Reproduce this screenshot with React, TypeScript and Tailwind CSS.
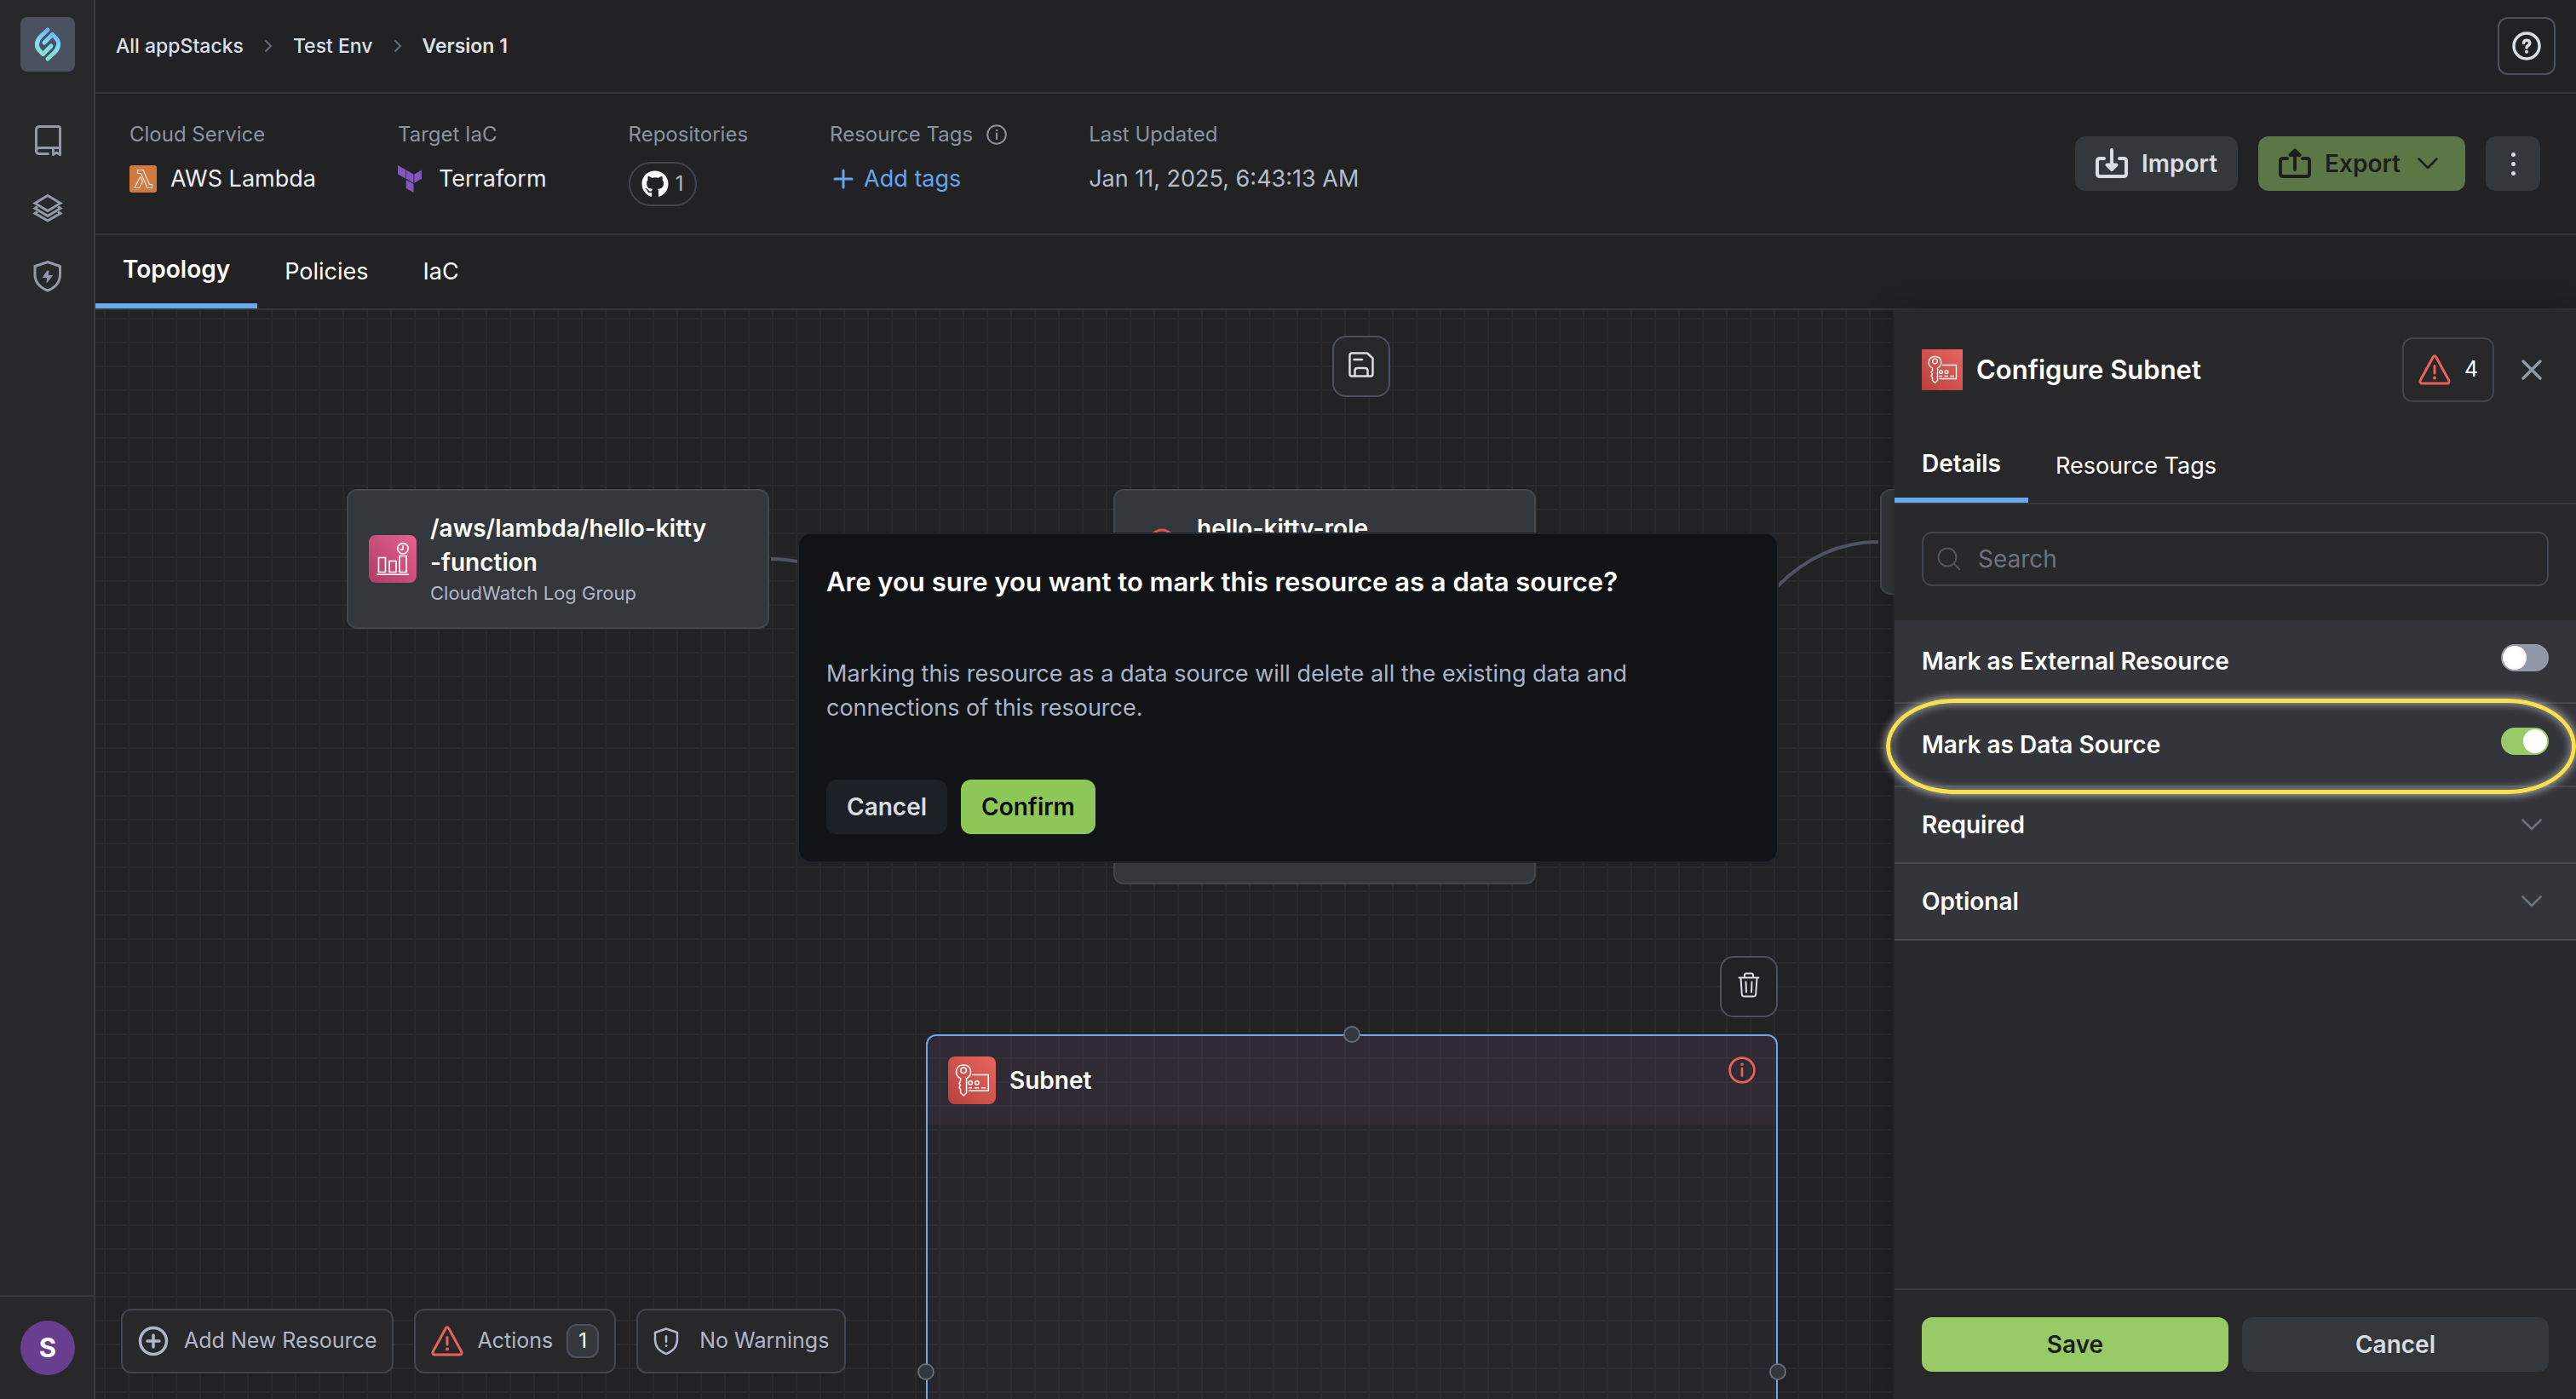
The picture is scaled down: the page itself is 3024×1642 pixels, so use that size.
import { useState } from 'react';
import type { ReactNode } from 'react';
import clsx from 'clsx';
import { FaGithub } from 'react-icons/fa';

function LogoIcon() {
  return (
    <svg viewBox="0 0 64 64" className="size-16" fill="none" aria-hidden="true">
      <defs>
        <linearGradient id="logo" x1="40" y1="12" x2="24" y2="52" gradientUnits="userSpaceOnUse">
          <stop offset="0" stopColor="#62a8f5" />
          <stop offset="0.5" stopColor="#7de0fb" />
          <stop offset="1" stopColor="#7ee2b8" />
        </linearGradient>
      </defs>
      <g stroke="url(#logo)" strokeWidth="5" strokeLinecap="round" strokeLinejoin="round">
        <path d="M32 15 L24 22.5 C18 28.5 18 35.5 23 40 L26.5 43.5 L36 34" />
        <path d="M32 49 L40 41.5 C46 35.5 46 28.5 41 24 L37.5 20.5 L28 30" />
      </g>
    </svg>
  );
}

function BookIcon() {
  return (
    <svg viewBox="0 0 40 40" className="size-10" fill="none" stroke="currentColor" strokeWidth="3" strokeLinecap="round" aria-hidden="true">
      <path d="M20.5 36.5 H10.5 Q6.5 36.5 6.5 32.5 V8.5 Q6.5 4.5 10.5 4.5 H32 Q34.5 4.5 34.5 7 V37" />
      <path d="M6.5 33 Q6.5 29.5 10.5 29.5 H34.5" />
      <path d="M26.5 30 V37.5 L30.5 35 L34.5 37.5" strokeLinejoin="round" />
    </svg>
  );
}

function LayersIcon() {
  return (
    <svg viewBox="0 0 40 40" className="size-10" fill="none" stroke="currentColor" strokeWidth="3" aria-hidden="true">
      <path d="M20 5.5 L35 14.5 L20 23.5 L5 14.5 Z" />
      <path d="M8 18.5 L5 20.5 L20 29.5 L35 20.5 L32 18.5" />
      <path d="M8 24.5 L5 26.5 L20 35 L35 26.5 L32 24.5" />
    </svg>
  );
}

function ShieldBoltIcon() {
  return (
    <svg viewBox="0 0 40 40" className="size-10" fill="none" stroke="currentColor" strokeWidth="3" strokeLinejoin="round" aria-hidden="true">
      <path d="M20 3.5 L34.5 8.5 V18 C34.5 27.5 29 33.5 20 37 C11 33.5 5 27.5 5 18 V8.5 Z" />
      <path d="M19.500 14 L14.500 21.500 H19.500 L19 27.500 L25.500 19.500 H20.500 L21 14 Z" fill="currentColor" strokeWidth="1" />
    </svg>
  );
}

function ChevronRight() {
  return (
    <svg viewBox="0 0 10 16" className="h-4 w-[10px] text-[#636b7a]" fill="none" stroke="currentColor" strokeWidth="2" aria-hidden="true">
      <path d="M1.5 1.5 L8 8 L1.5 14.5" />
    </svg>
  );
}

function ChevronDown() {
  return (
    <svg viewBox="0 0 24 14" className="h-[14px] w-6" fill="none" stroke="currentColor" strokeWidth="2.5" strokeLinecap="round" strokeLinejoin="round" aria-hidden="true">
      <path d="M1.5 1.5 L12 12 L22.5 1.5" />
    </svg>
  );
}

function LambdaIcon() {
  return (
    <svg viewBox="0 0 32 32" className="size-8" fill="none" aria-hidden="true">
      <rect width="32" height="32" rx="3" fill="#d07a40" />
      <g stroke="#fbe9dc" strokeWidth="1.2" strokeLinejoin="round">
        <path d="M9.5 5.5 H16 L23.5 22.5 H26.5 V26.5 H21 L13.5 9.5 H9.5 Z" />
        <path d="M12.5 13.5 L15.5 19 L11.5 26.5 H6 Z" />
      </g>
    </svg>
  );
}

function TerraformIcon() {
  return (
    <svg viewBox="0 0 28 32" className="h-8 w-7" fill="#8355be" aria-hidden="true">
      <path d="M0 0 L9 5 V15.5 L0 10.5 Z" />
      <path d="M9.7 5.5 L18.5 10.5 V20.8 L9.7 15.8 Z" />
      <path d="M19.3 10.5 L28 5.5 V15.8 L19.3 20.8 Z" />
      <path d="M9.7 17 L18.5 22 V32 L9.7 27 Z" />
    </svg>
  );
}

function InfoIcon({ className, strokeWidth = 2 }: { className?: string; strokeWidth?: number }) {
  return (
    <svg viewBox="0 0 24 24" className={className} fill="none" stroke="currentColor" strokeWidth={strokeWidth} strokeLinecap="round" aria-hidden="true">
      <circle cx="12" cy="12" r="10.8" />
      <path d="M12 10.5 V17" />
      <circle cx="12" cy="7" r="0.8" fill="currentColor" strokeWidth="1" />
    </svg>
  );
}

function PlusIcon() {
  return (
    <svg viewBox="0 0 24 24" className="size-6" fill="none" stroke="currentColor" strokeWidth="3" strokeLinecap="round" aria-hidden="true">
      <path d="M12 2 V22 M2 12 H22" />
    </svg>
  );
}

function HelpIcon() {
  return (
    <svg viewBox="0 0 34 34" className="size-[34px]" fill="none" stroke="currentColor" aria-hidden="true">
      <circle cx="17" cy="17" r="15" strokeWidth="3.5" />
      <path d="M13.5 13.5 C13.5 9 20.8 9 20.8 13.5 C20.8 16.5 17 16.5 17 19" strokeWidth="3.5" strokeLinecap="round" />
      <circle cx="17" cy="23.8" r="2" fill="currentColor" stroke="none" />
    </svg>
  );
}

function TrayIcon({ up }: { up?: boolean }) {
  return (
    <svg viewBox="0 0 38 36" className="h-9 w-[38px]" fill="none" stroke="currentColor" strokeWidth="4" strokeLinecap="round" strokeLinejoin="round" aria-hidden="true">
      <path d="M10 12 H5 Q2 12 2 15 V30 Q2 33 5 33 H33 Q36 33 36 30 V15 Q36 12 33 12 H28" />
      {up ? <path d="M19 25 V3 M13.5 8 L19 2.5 L24.5 8 Z" /> : <path d="M19 2 V24 M13.5 19.5 L19 25 L24.5 19.5 Z" />}
    </svg>
  );
}

function WarningIcon() {
  return (
    <svg viewBox="0 0 38 36" className="h-9 w-[38px] shrink-0 text-[#e8625a]" fill="none" stroke="currentColor" strokeLinejoin="round" strokeLinecap="round" aria-hidden="true">
      <path d="M17.3 3 Q19 0.5 20.7 3 L35.8 30.5 Q36.8 34 33.5 34 H4.5 Q1.2 34 2.2 30.5 Z" strokeWidth="3" />
      <path d="M19 13.5 V22" strokeWidth="3" />
      <circle cx="19" cy="27.5" r="2" fill="currentColor" stroke="none" />
    </svg>
  );
}

function SaveIcon() {
  return (
    <svg viewBox="0 0 32 32" className="size-8" fill="none" stroke="currentColor" strokeWidth="2.5" strokeLinejoin="round" aria-hidden="true">
      <path d="M5 2.5 H23 L29.5 8.5 V27 Q29.5 29.5 27 29.5 H5 Q2.5 29.5 2.5 27 V5 Q2.5 2.5 5 2.5 Z" />
      <path d="M8.5 29 V23 Q8.5 20 11.5 20 H20.5 Q23.5 20 23.5 23 V29" />
      <path d="M7.5 10 H17" strokeLinecap="round" />
    </svg>
  );
}

function TrashIcon() {
  return (
    <svg viewBox="0 0 26 30" className="h-[30px] w-[26px]" fill="none" stroke="currentColor" strokeWidth="2" strokeLinecap="round" strokeLinejoin="round" aria-hidden="true">
      <path d="M1.5 6.5 H24.5 M8 6 V3.5 Q8 1.5 10 1.5 H16 Q18 1.5 18 3.5 V6" />
      <path d="M3.5 7 L4.8 26 Q5 28.5 7.5 28.5 H18.5 Q21 28.5 21.2 26 L22.5 7" />
      <path d="M9.5 11.5 L10 23.5 M16.5 11.5 L16 23.5" />
    </svg>
  );
}

function AddCircleIcon() {
  return (
    <svg viewBox="0 0 36 36" className="size-9" fill="none" stroke="currentColor" strokeWidth="3.5" strokeLinecap="round" aria-hidden="true">
      <circle cx="18" cy="18" r="15.5" />
      <path d="M18 11 V25 M11 18 H25" />
    </svg>
  );
}

function ShieldAlertIcon() {
  return (
    <svg viewBox="0 0 30 34" className="h-[34px] w-[30px]" fill="none" stroke="currentColor" strokeWidth="2.5" strokeLinejoin="round" strokeLinecap="round" aria-hidden="true">
      <path d="M15 2.5 L28 7 V15 C28 23.5 23 29 15 32 C7 29 2 23.5 2 15 V7 Z" />
      <path d="M15 11.5 V18" />
      <circle cx="15" cy="22.5" r="1" fill="currentColor" strokeWidth="1" />
    </svg>
  );
}

function SearchIcon() {
  return (
    <svg viewBox="0 0 28 28" className="size-7 text-[#4d5566]" fill="none" stroke="currentColor" strokeWidth="2" strokeLinecap="round" aria-hidden="true">
      <circle cx="12" cy="12" r="10.5" />
      <path d="M19.5 19.5 L26.5 26.5" />
    </svg>
  );
}

function CloseIcon() {
  return (
    <svg viewBox="0 0 24 24" className="size-6" fill="none" stroke="currentColor" strokeWidth="3.5" strokeLinecap="round" aria-hidden="true">
      <path d="M2 2 L22 22 M22 2 L2 22" />
    </svg>
  );
}

function SubnetIcon({ className }: { className?: string }) {
  return (
    <svg viewBox="0 0 48 48" className={className} fill="none" stroke="#fff" aria-hidden="true">
      <defs>
        <linearGradient id="subnet" x1="0" y1="1" x2="1" y2="0">
          <stop offset="0" stopColor="#b9403c" />
          <stop offset="1" stopColor="#e9655f" />
        </linearGradient>
      </defs>
      <rect width="48" height="48" fill="url(#subnet)" stroke="none" />
      <g strokeWidth="1.3" strokeLinejoin="round">
        <path d="M12.5 22 C6 19 7 8.5 15.5 8.5 C24 8.5 25 19 18.5 22 V36.5 L15.5 39.5 L12.5 36.5 V33 L11 31 L12.5 29 L11 27 L12.5 25 Z" />
        <circle cx="15.5" cy="14" r="2.8" />
        <path d="M24 18.5 H40.5 V34.5 H20.5" />
        <circle cx="22.5" cy="26.5" r="1.9" />
        <circle cx="29" cy="26.5" r="1.9" />
        <path d="M20.5 31.5 H24 M26.5 31.5 H31 M33.5 31.5 H38" />
      </g>
    </svg>
  );
}

function CloudWatchIcon() {
  return (
    <svg viewBox="0 0 56 56" className="size-14 shrink-0 rounded-lg" fill="none" stroke="#fff" strokeWidth="1.6" aria-hidden="true">
      <defs>
        <linearGradient id="cloudwatch" x1="0" y1="1" x2="1" y2="0">
          <stop offset="0" stopColor="#b03c66" />
          <stop offset="1" stopColor="#e5628f" />
        </linearGradient>
      </defs>
      <rect width="56" height="56" fill="url(#cloudwatch)" stroke="none" />
      <rect x="11.5" y="26.5" width="8" height="17" />
      <rect x="24" y="30.5" width="8" height="13" />
      <rect x="36" y="24.5" width="8" height="19" />
      <path d="M9 46.2 H47" />
      <circle cx="40" cy="15.8" r="6.2" />
      <path d="M40 12 V17 H36.5" />
    </svg>
  );
}

const sideLinks = [
  { name: 'Catalog', icon: <BookIcon /> },
  { name: 'Stacks', icon: <LayersIcon /> },
  { name: 'Security', icon: <ShieldBoltIcon /> },
];

function Sidebar() {
  return (
    <aside className="flex w-28 shrink-0 flex-col border-r-2 border-[#34373c] bg-[#28282a] pt-5">
      <a href="#" aria-label="Home" className="ml-6 size-16 rounded-lg bg-[#4b5160]">
        <LogoIcon />
      </a>
      <nav className="mt-[60px] ml-9 flex flex-col gap-10 text-[#9199a8]">
        {sideLinks.map((link) => (
          <a key={link.name} href="#" aria-label={link.name}>
            {link.icon}
          </a>
        ))}
      </nav>
      <div className="mt-auto border-t-2 border-[#34373c] py-7 pl-6">
        <button aria-label="Account" className="size-16 rounded-full bg-[#693e8e] text-[31px] leading-10 font-bold text-white">
          S
        </button>
      </div>
    </aside>
  );
}

function Field({ label, children }: { label: ReactNode; children: ReactNode }) {
  return (
    <div>
      <div className="flex h-8 items-center gap-4 text-[24px] text-[#8b93a2]">{label}</div>
      {children}
    </div>
  );
}

function Header() {
  return (
    <>
      <header className="flex h-[110px] items-center justify-between border-b-2 border-[#34373c] px-6">
        <nav aria-label="Breadcrumb" className="flex items-center gap-6 text-[23px] font-medium text-[#dde0e6]">
          <a href="#">All appStacks</a>
          <ChevronRight />
          <a href="#">Test Env</a>
          <ChevronRight />
          <a href="#" className="font-semibold">Version 1</a>
        </nav>
        <button aria-label="Help" className="flex size-[68px] items-center justify-center rounded-xl border-2 border-[#4b5160] text-[#d9dde4]">
          <HelpIcon />
        </button>
      </header>

      <section className="flex h-[166px] items-start justify-between border-b-2 border-[#34373c] pr-[42px] pl-10">
        <div className="flex gap-24 pt-8 text-[27px] leading-8">
          <Field label="Cloud Service">
            <div className="mt-5 flex items-center gap-4 text-[#ececee]">
              <LambdaIcon />
              AWS Lambda
            </div>
          </Field>
          <Field label="Target IaC">
            <div className="mt-5 flex items-center gap-5 text-[#ececee]">
              <TerraformIcon />
              Terraform
            </div>
          </Field>
          <Field label="Repositories">
            <button aria-label="1 repository" className="mt-4 flex h-[52px] w-20 items-center justify-center gap-2 rounded-full border-2 border-[#3f444d] text-[24px] text-[#aeb6c6]">
              <FaGithub className="size-8 text-white" />
              1
            </button>
          </Field>
          <Field
            label={
              <>
                Resource Tags
                <InfoIcon className="size-6" />
              </>
            }
          >
            <button className="mt-5 flex items-center gap-3 pl-1 text-[#64a6ee]">
              <PlusIcon />
              Add tags
            </button>
          </Field>
          <Field label="Last Updated">
            <div className="mt-5 text-[#b4bbca]">Jan 11, 2025, 6:43:13 AM</div>
          </Field>
        </div>

        <div className="flex gap-6 pt-[50px] text-[28px] font-semibold">
          <button className="flex h-16 items-center gap-4 rounded-xl bg-[#34373c] px-6 text-[#d9dde4]">
            <TrayIcon />
            Import
          </button>
          <button className="flex h-16 items-center gap-4 rounded-xl bg-[#5b7745] pr-8 pl-6 text-[#1d1f1f]">
            <TrayIcon up />
            Export
            <span className="pl-1">
              <ChevronDown />
            </span>
          </button>
          <button aria-label="More actions" className="flex size-16 flex-col items-center justify-center gap-[6px] rounded-xl bg-[#34373c]">
            <span className="size-[5px] rounded-full bg-[#d9dde4]" />
            <span className="size-[5px] rounded-full bg-[#d9dde4]" />
            <span className="size-[5px] rounded-full bg-[#d9dde4]" />
          </button>
        </div>
      </section>
    </>
  );
}

function Tabs({ tabs, className }: { tabs: string[]; className?: string }) {
  const [active, setActive] = useState(tabs[0]);

  return (
    <div role="tablist" className={clsx('flex border-b-2 border-[#34373c] text-white', className)}>
      {tabs.map((tab) => (
        <button
          key={tab}
          role="tab"
          aria-selected={tab === active}
          onClick={() => setActive(tab)}
          className={clsx('px-8', tab === active ? 'border-b-[6px] border-[#68a9ec] text-[28px] font-semibold' : 'text-[27px]')}
        >
          {tab}
        </button>
      ))}
    </div>
  );
}

function Handle({ className }: { className: string }) {
  return <span className={clsx('absolute size-5 rounded-full border-2 border-[#636b7a] bg-[#34383e]', className)} />;
}

function Canvas() {
  return (
    <main className="relative flex-1 overflow-hidden bg-[linear-gradient(to_right,#2a2a2c_2px,transparent_2px),linear-gradient(to_bottom,#2a2a2c_2px,transparent_2px)] bg-size-[28px_28px] bg-position-[10px_9px]">
      <svg className="absolute inset-0 size-full" fill="none" stroke="#4d5364" strokeWidth="4" aria-hidden="true">
        <path d="M793 292 C994 292 994 620 1195 620" />
        <path d="M1691 612 C1892 612 1892 272 2093 272" />
      </svg>

      <div className="absolute top-[210px] left-[295px] flex h-[164px] w-[496px] items-center gap-4 rounded-xl border-2 border-[#42464f] bg-[#34373b] px-6">
        <CloudWatchIcon />
        <div>
          <div className="text-[28px] leading-10 font-semibold text-white">
            /aws/lambda/hello-kitty
            <br />
            -function
          </div>
          <div className="text-[22px] leading-8 text-[#aeb6c9]">CloudWatch Log Group</div>
        </div>
      </div>

      <div className="absolute top-[210px] left-[1195px] flex h-[464px] w-[496px] items-start gap-4 rounded-xl border-2 border-[#42464f] bg-[#34373b] px-6 py-6">
        <svg viewBox="0 0 56 56" className="mt-4 size-14 shrink-0" fill="none" stroke="#d9534f" strokeWidth="3" aria-hidden="true">
          <circle cx="31" cy="20" r="14" />
          <path d="M7 52 C7 30 55 30 55 52" />
        </svg>
        <div className="text-[28px] leading-10 font-semibold text-white">hello-kitty-role</div>
      </div>

      <div className="absolute top-[210px] left-[2095px] h-[124px] w-[496px] rounded-xl border-2 border-[#42464f] bg-[#34373b]" />

      <button aria-label="Save layout" className="absolute top-[30px] left-[1452px] flex h-[72px] w-[68px] items-center justify-center rounded-2xl border-2 border-[#4b5160] bg-[#28282a] pb-1 text-[#d9dde4]">
        <SaveIcon />
      </button>

      <button aria-label="Delete resource" className="absolute top-[758px] left-[1907px] flex h-[72px] w-[68px] items-center justify-center rounded-2xl border-2 border-[#4b5160] bg-[#222224] pb-1 text-[#d9dde4]">
        <TrashIcon />
      </button>

      <div className="absolute top-[850px] left-[975px] h-[792px] w-[1000px] rounded-xl border-2 border-[#68a9ec] bg-[#605488]/8">
        <div className="flex h-[104px] items-start justify-between rounded-t-xl bg-[#814e86]/10 px-6 pt-6">
          <div className="flex items-center gap-4 text-[28px] font-semibold text-white">
            <SubnetIcon className="size-14 rounded-lg" />
            Subnet
          </div>
          <InfoIcon className="size-8 text-[#e8625a]" />
        </div>
        <Handle className="-top-3 left-[488px]" />
        <Handle className="top-[384px] -left-3" />
        <Handle className="top-[384px] -right-3" />
      </div>

      <div className="absolute bottom-[30px] left-[30px] flex gap-6 text-[25px] text-[#aeb6c9]">
        <button className="flex h-[76px] items-center gap-[18px] rounded-xl border-2 border-[#3f444d] bg-[#28282a] px-[18px]">
          <AddCircleIcon />
          Add New Resource
        </button>
        <button className="flex h-[76px] items-center gap-4 rounded-xl border-2 border-[#3f444d] bg-[#28282a] px-[18px]">
          <WarningIcon />
          Actions
          <span className="flex h-10 w-[38px] items-center justify-center rounded-xl border-2 border-[#4b5160] bg-[#34373c] text-[24px] text-white">1</span>
        </button>
        <button className="flex h-[76px] items-center gap-6 rounded-xl border-2 border-[#3f444d] bg-[#28282a] px-[18px]">
          <ShieldAlertIcon />
          No Warnings
        </button>
      </div>
    </main>
  );
}

function ToggleRow({ id, label, defaultChecked, highlighted }: { id: string; label: string; defaultChecked?: boolean; highlighted?: boolean }) {
  return (
    <div className="relative flex items-start justify-between border-b-2 border-[#424750] px-8 py-7">
      <label htmlFor={id} className="leading-10">{label}</label>
      <input
        id={id}
        type="checkbox"
        role="switch"
        defaultChecked={defaultChecked}
        className="relative h-8 w-14 appearance-none rounded-full bg-[#9199a8] before:absolute before:top-[2px] before:left-[2px] before:size-7 before:rounded-full before:bg-white before:content-[''] checked:bg-[#98cb68] checked:before:left-[26px]"
      />
      {highlighted && (
        <div className="pointer-events-none absolute -top-[6px] right-0 -bottom-[10px] -left-[10px] z-10 rounded-[80px/56px] border-[5px] border-[#f7df4e] shadow-[0_0_10px_2px_rgba(255,255,255,0.55),inset_0_0_10px_2px_rgba(255,255,255,0.45)]" />
      )}
    </div>
  );
}

function ConfigPanel() {
  return (
    <aside className="relative z-10 flex w-[800px] shrink-0 flex-col bg-[#28282a] text-[28px] text-white shadow-[0_0_28px_rgba(0,0,0,0.3)]">
      <div className="flex items-center justify-between pt-8 pr-10 pl-8">
        <h2 className="flex items-center gap-4 text-[31px] font-semibold">
          <SubnetIcon className="size-12" />
          Configure Subnet
        </h2>
        <div className="flex items-center gap-8">
          <button aria-label="4 issues" className="flex h-[76px] w-[108px] items-center justify-center gap-4 rounded-xl border-2 border-[#3f444d] text-[25px]">
            <WarningIcon />
            4
          </button>
          <button aria-label="Close" className="text-[#9199a8]">
            <CloseIcon />
          </button>
        </div>
      </div>

      <Tabs tabs={['Details', 'Resource Tags']} className="mt-8 h-[88px]" />

      <div className="relative mx-8 mt-8 mb-10">
        <span className="pointer-events-none absolute inset-y-0 left-[18px] flex items-center">
          <SearchIcon />
        </span>
        <input
          type="search"
          aria-label="Search"
          placeholder="Search"
          className="h-16 w-full rounded-xl border-2 border-[#3f444d] bg-transparent pr-4 pl-16 text-[28px] outline-none placeholder:text-[#6b7382]"
        />
      </div>

      <div className="bg-[#34353a] font-semibold">
        <ToggleRow id="external" label="Mark as External Resource" />
        <ToggleRow id="data-source" label="Mark as Data Source" defaultChecked highlighted />
        {['Required', 'Optional'].map((name) => (
          <button key={name} className="flex w-full items-center justify-between border-b-2 border-[#424750] py-6 pr-10 pl-8 leading-10">
            {name}
            <span className="text-[#6b7382]">
              <ChevronDown />
            </span>
          </button>
        ))}
      </div>

      <div className="mt-auto flex gap-4 border-t-2 border-[#34373c] p-8 font-semibold">
        <button className="h-16 flex-1 rounded-xl bg-[#98cb68] text-[#1c1e1c]">Save</button>
        <button className="h-16 flex-1 rounded-xl bg-[#34373c] text-[#d9dde4]">Cancel</button>
      </div>
    </aside>
  );
}

function ConfirmDialog() {
  return (
    <div className="pointer-events-none fixed inset-0 z-20 flex items-center justify-center pb-1">
      <div role="dialog" aria-labelledby="confirm-title" className="pointer-events-auto w-[1152px] max-w-full rounded-2xl border-2 border-[#1f252c] bg-[#121316] px-8 py-8">
        <h2 id="confirm-title" className="text-[31px] leading-[48px] font-semibold text-white">
          Are you sure you want to mark this resource as a data source?
        </h2>
        <p className="mt-16 max-w-[1000px] text-[27px] leading-10 text-[#a9b4c6]">
          Marking this resource as a data source will delete all the existing data and connections of this resource.
        </p>
        <div className="mt-16 flex gap-4 text-[28px] font-semibold">
          <button className="h-16 rounded-xl bg-[#1c2128] px-6 text-[#d9dde4]">Cancel</button>
          <button className="h-16 rounded-xl bg-[#8dc757] px-6 text-[#0b0d09]">Confirm</button>
        </div>
      </div>
    </div>
  );
}

export default function App() {
  return (
    <div className="flex h-screen bg-[#222224] font-[Inter,sans-serif]">
      <Sidebar />
      <div className="flex min-w-0 flex-1 flex-col">
        <Header />
        <Tabs tabs={['Topology', 'Policies', 'IaC']} className="h-[88px] shrink-0" />
        <div className="flex min-h-0 flex-1">
          <Canvas />
          <ConfigPanel />
        </div>
      </div>
      <ConfirmDialog />
    </div>
  );
}
